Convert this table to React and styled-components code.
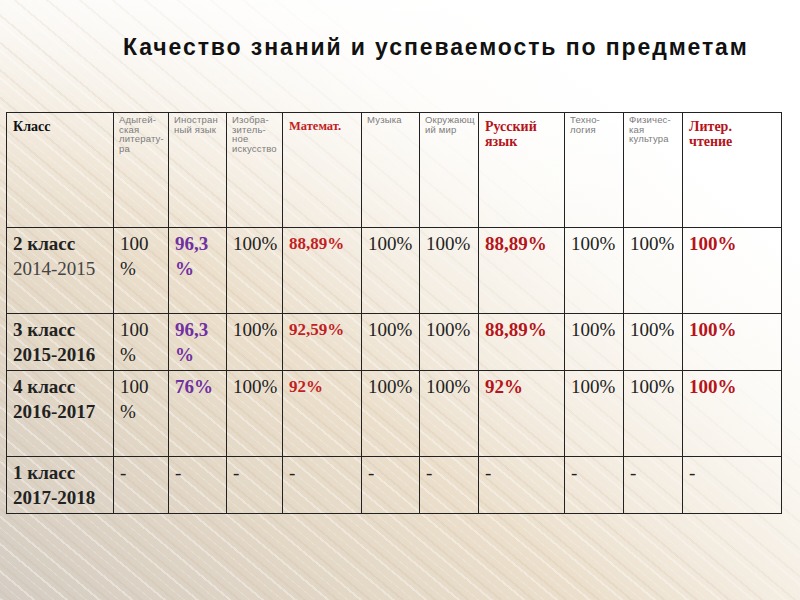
import React from 'react';
import styled, { createGlobalStyle } from 'styled-components';

const GlobalStyle = createGlobalStyle`
  html, body {
    margin: 0;
    padding: 0;
  }
  body {
    width: 800px;
    height: 600px;
    overflow: hidden;
  }
`;

const columns = [107, 55, 58, 56, 79, 58, 59, 86, 59, 59, 99];

const headers = [
  { text: ['Класс'], kind: 'main' },
  { text: ['Адыгей-', 'ская', 'литерату-', 'ра'], kind: 'small' },
  { text: ['Иностран', 'ный язык'], kind: 'small' },
  { text: ['Изобра-', 'зитель-', 'ное', 'искусство'], kind: 'small' },
  { text: ['Математ.'], kind: 'red' },
  { text: ['Музыка'], kind: 'small' },
  { text: ['Окружающ', 'ий мир'], kind: 'small' },
  { text: ['Русский', 'язык'], kind: 'redBig' },
  { text: ['Техно-', 'логия'], kind: 'small' },
  { text: ['Физичес-', 'кая', 'культура'], kind: 'small' },
  { text: ['Литер.', 'чтение'], kind: 'redBig' },
];

const rows = [
  {
    height: 86,
    label: ['2 класс', '2014-2015'],
    yearBold: false,
    cells: [['100', '%'], ['96,3', '%'], ['100%'], ['88,89%'], ['100%'], ['100%'], ['88,89%'], ['100%'], ['100%'], ['100%']],
  },
  {
    height: 57,
    label: ['3 класс', '2015-2016'],
    yearBold: true,
    cells: [['100', '%'], ['96,3', '%'], ['100%'], ['92,59%'], ['100%'], ['100%'], ['88,89%'], ['100%'], ['100%'], ['100%']],
  },
  {
    height: 86,
    label: ['4 класс', '2016-2017'],
    yearBold: true,
    cells: [['100', '%'], ['76%'], ['100%'], ['92%'], ['100%'], ['100%'], ['92%'], ['100%'], ['100%'], ['100%']],
  },
  {
    height: 57,
    label: ['1 класс', '2017-2018'],
    yearBold: true,
    empty: true,
    cells: [['-'], ['-'], ['-'], ['-'], ['-'], ['-'], ['-'], ['-'], ['-'], ['-']],
  },
];

// colour of each data column (index 0 = first subject)
const tones = ['plain', 'purple', 'plain', 'red', 'plain', 'plain', 'redBig', 'plain', 'plain', 'redBig'];

const Slide = styled.div`
  position: relative;
  width: 800px;
  height: 600px;
  box-sizing: border-box;
  padding: 27px 0 0 6px;
  display: flex;
  flex-direction: column;
  background:
    linear-gradient(180deg, rgba(255,255,255,0.8) 0%, rgba(255,255,255,0.35) 20%, rgba(255,255,255,0) 42%),
    linear-gradient(40deg, #d5cdc3 0%, #e4d8c6 25%, #ece0cd 40%, #f4ede2 52%, #fcfaf6 66%, #ffffff 80%);

  /* streaky light texture, fading out towards the right */
  &::before {
    content: '';
    position: absolute;
    inset: 0;
    background: repeating-linear-gradient(40deg,
      rgba(255,255,255,0.35) 0 2px,
      rgba(255,255,255,0) 2px 6px,
      rgba(190,172,148,0.14) 6px 8px,
      rgba(255,255,255,0) 8px 13px,
      rgba(255,255,255,0.2) 13px 14px,
      rgba(255,255,255,0) 14px 21px);
    -webkit-mask-image: linear-gradient(40deg, #000 0%, #000 45%, transparent 70%);
    mask-image: linear-gradient(40deg, #000 0%, #000 45%, transparent 70%);
    pointer-events: none;
  }

  & > * {
    position: relative;
  }
`;

const Title = styled.h1`
  margin: 0 0 0 117px;
  font-family: "Liberation Sans", Arial, sans-serif;
  font-weight: bold;
  font-size: 23px;
  letter-spacing: 1.9px;
  line-height: 40px;
  color: #111;
  white-space: nowrap;
`;

const Table = styled.table`
  margin-top: 45px;
  border-collapse: collapse;
  table-layout: fixed;
  width: 775px;
`;

const HeadCell = styled.th`
  border: 1.5px solid #222;
  vertical-align: top;
  text-align: left;
  padding: ${p => (p.kind === 'small' ? '2px 5px' : '6px 6px')};
  height: 115px;
  box-sizing: border-box;
  font-family: ${p => (p.kind === 'small' ? '"Liberation Sans", Arial, sans-serif' : '"Liberation Serif", "Times New Roman", serif')};
  font-weight: ${p => (p.kind === 'small' ? 'normal' : 'bold')};
  font-size: ${p => ({ small: '9.5px', main: '14px', red: '12.5px', redBig: '14px' }[p.kind])};
  line-height: ${p => (p.kind === 'small' ? '9.5px' : '15px')};
  letter-spacing: ${p => (p.kind === 'small' ? '0.2px' : '0')};
  color: ${p => ({ small: '#7c7c7c', main: '#111', red: '#c21f24', redBig: '#b5141a' }[p.kind])};
`;

const Row = styled.tr`
  height: ${p => p.height}px;
`;

const Cell = styled.td`
  border: 1.5px solid #222;
  vertical-align: top;
  text-align: left;
  padding: 3px 6px;
  box-sizing: border-box;
  font-family: "Liberation Serif", "Times New Roman", serif;
  font-size: ${p => (p.tone === 'red' ? '17px' : '19px')};
  line-height: 25px;
  font-weight: ${p => (p.tone === 'plain' ? 'normal' : 'bold')};
  color: ${p => ({ plain: '#222', purple: '#7030a0', red: '#c21f24', redBig: '#b5141a' }[p.tone])};
`;

const LabelCell = styled(Cell)`
  color: #222;
`;

const Year = styled.span`
  display: block;
  font-weight: ${p => (p.bold ? 'bold' : 'normal')};
  color: ${p => (p.bold ? '#222' : '#444')};
`;

const Line = styled.span`
  display: block;
  white-space: nowrap;
`;

export default function App() {
  return (
    <Slide>
      <GlobalStyle />
      <Title>Качество знаний и успеваемость по предметам</Title>
      <Table>
        <colgroup>
          {columns.map((w, i) => (
            <col key={i} style={{ width: w }} />
          ))}
        </colgroup>
        <thead>
          <tr>
            {headers.map((h, i) => (
              <HeadCell key={i} kind={h.kind}>
                {h.text.map((t, j) => (
                  <Line key={j}>{t}</Line>
                ))}
              </HeadCell>
            ))}
          </tr>
        </thead>
        <tbody>
          {rows.map((r, i) => (
            <Row key={i} height={r.height}>
              <LabelCell tone="bold">
                <Line>{r.label[0]}</Line>
                <Year bold={r.yearBold}>{r.label[1]}</Year>
              </LabelCell>
              {r.cells.map((c, j) => (
                <Cell key={j} tone={r.empty ? 'plain' : tones[j]}>
                  {c.map((t, k) => (
                    <Line key={k}>{t}</Line>
                  ))}
                </Cell>
              ))}
            </Row>
          ))}
        </tbody>
      </Table>
    </Slide>
  );
}
